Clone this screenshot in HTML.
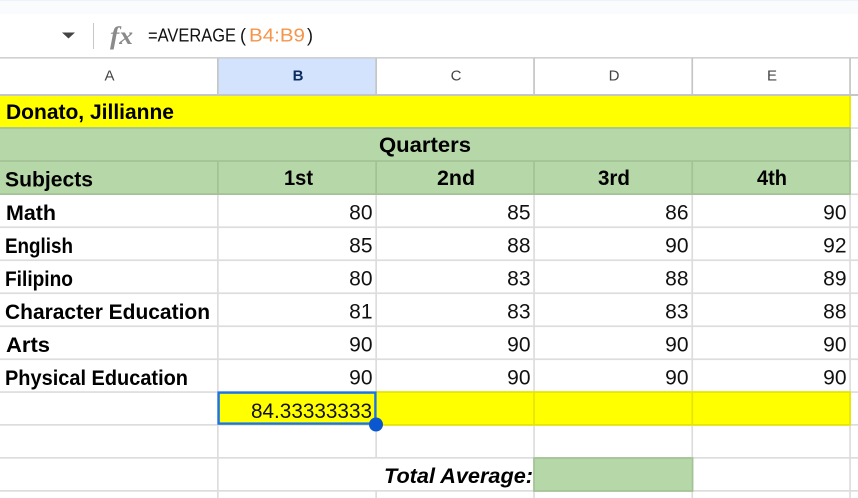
<!DOCTYPE html>
<html><head><meta charset="utf-8"><style>
html,body{margin:0;padding:0;width:858px;height:498px;overflow:hidden;background:#fff}
svg{display:block}
.c{font-family:"Liberation Sans",sans-serif;font-weight:bold;font-size:21px;fill:#000}
.n{font-family:"Liberation Sans",sans-serif;font-size:21px;fill:#111}
.h{font-family:"Liberation Sans",sans-serif;font-size:15px;fill:#444;text-anchor:middle}
.f{font-family:"Liberation Sans",sans-serif;font-size:18px;fill:#111}
</style></head><body>
<svg width="858" height="498" viewBox="0 0 858 498" xmlns="http://www.w3.org/2000/svg">
<!-- top strip -->
<rect x="0" y="0" width="858" height="14" fill="#f9fbfd"/>
<rect x="0" y="0" width="858" height="1" fill="#eef2fb"/>
<!-- formula bar -->
<path d="M62 32.5H75L68.5 38.5Z" fill="#444"/>
<rect x="93" y="23" width="1" height="26" fill="#c7c7c7"/>
<text x="110" y="44" font-family="Liberation Serif,serif" font-style="italic" font-weight="bold" font-size="25" fill="#8a8a8a" textLength="23" lengthAdjust="spacingAndGlyphs">fx</text>
<text x="148" y="41.5" class="f" textLength="88" lengthAdjust="spacingAndGlyphs">=AVERAGE</text>
<text x="240" y="41.5" class="f">(</text>
<text x="249" y="41.5" class="f" style="fill:#f6944a" textLength="56" lengthAdjust="spacingAndGlyphs">B4:B9</text>
<text x="307" y="41.5" class="f">)</text>

<!-- column header -->
<rect x="218" y="58" width="158" height="37" fill="#d3e3fd"/>
<rect x="0" y="57.2" width="858" height="1.3" fill="#c4c7c5"/>
<rect x="0" y="94" width="858" height="2" fill="#c4c7c5"/>
<g fill="#c4c7c5">
<rect x="217" y="58" width="1.7" height="37"/>
<rect x="375.3" y="58" width="1.7" height="37"/>
<rect x="533.2" y="58" width="1.7" height="37"/>
<rect x="691.4" y="58" width="1.7" height="37"/>
<rect x="849.2" y="58" width="1.7" height="37"/>
</g>
<text x="109.5" y="80.5" class="h">A</text>
<text x="298" y="80.5" class="h" style="fill:#0b2a5e;font-weight:bold">B</text>
<text x="456" y="80.5" class="h">C</text>
<text x="614" y="80.5" class="h">D</text>
<text x="772" y="80.5" class="h">E</text>

<!-- grid -->
<g fill="#dddddd">
<rect x="0" y="226.4" width="858" height="1.7"/>
<rect x="0" y="259.4" width="858" height="1.7"/>
<rect x="0" y="292.4" width="858" height="1.7"/>
<rect x="0" y="325.4" width="858" height="1.7"/>
<rect x="0" y="358.4" width="858" height="1.7"/>
<rect x="0" y="391.2" width="858" height="1.7"/>
<rect x="0" y="424" width="858" height="1.7"/>
<rect x="0" y="457" width="858" height="1.7"/>
<rect x="0" y="490" width="858" height="1.7"/>
<rect x="850" y="127.2" width="8" height="1.7"/>
<rect x="850" y="160.2" width="8" height="1.7"/>
<rect x="850" y="193.4" width="8" height="1.7"/>
<rect x="217" y="194" width="1.7" height="304"/>
<rect x="375.3" y="194" width="1.7" height="264"/>
<rect x="375.3" y="491" width="1.7" height="7"/>
<rect x="533.2" y="194" width="1.7" height="304"/>
<rect x="691.4" y="194" width="1.7" height="304"/>
<rect x="849.2" y="194" width="1.7" height="304"/>
</g>

<!-- yellow title -->
<rect x="0" y="96" width="850.6" height="32" fill="#ffff00"/>
<rect x="849.2" y="96" width="1.7" height="32" fill="#e6e600"/>
<!-- green rows -->
<rect x="0" y="128" width="850.6" height="66" fill="#b6d7a8"/>
<g fill="#a3c296">
<rect x="0" y="127.1" width="850.6" height="1.7"/>
<rect x="0" y="160.2" width="850.6" height="1.7"/>
<rect x="0" y="193.3" width="850.6" height="1.7"/>
<rect x="849.2" y="128" width="1.7" height="66"/>
<rect x="217" y="161" width="1.7" height="33"/>
<rect x="375.3" y="161" width="1.7" height="33"/>
<rect x="533.2" y="161" width="1.7" height="33"/>
<rect x="691.4" y="161" width="1.7" height="33"/>
</g>

<!-- yellow average row -->
<rect x="218" y="392" width="632.6" height="33" fill="#ffff00"/>
<g fill="#e6e600">
<rect x="376" y="391.2" width="474.8" height="1.7"/>
<rect x="376" y="424" width="474.8" height="1.8"/>
<rect x="533.2" y="392" width="1.7" height="33"/>
<rect x="691.4" y="392" width="1.7" height="33"/>
<rect x="849.2" y="392" width="1.7" height="33"/>
</g>

<!-- total average green cell -->
<rect x="534" y="458" width="158.6" height="33" fill="#b6d7a8" stroke="#a3c296" stroke-width="1.7"/>

<!-- labels -->
<text x="6" y="119" class="c" textLength="168" lengthAdjust="spacingAndGlyphs">Donato, Jillianne</text>
<text x="379" y="152" class="c" textLength="92" lengthAdjust="spacingAndGlyphs">Quarters</text>
<text x="5" y="186.5" class="c" textLength="88" lengthAdjust="spacingAndGlyphs">Subjects</text>
<text x="284" y="185" class="c" textLength="29" lengthAdjust="spacingAndGlyphs">1st</text>
<text x="437" y="185" class="c" textLength="38" lengthAdjust="spacingAndGlyphs">2nd</text>
<text x="598" y="185" class="c" textLength="32" lengthAdjust="spacingAndGlyphs">3rd</text>
<text x="757" y="185" class="c" textLength="30" lengthAdjust="spacingAndGlyphs">4th</text>
<text x="6" y="220" class="c" textLength="50" lengthAdjust="spacingAndGlyphs">Math</text>
<text x="5" y="253" class="c" textLength="68" lengthAdjust="spacingAndGlyphs">English</text>
<text x="5" y="286" class="c" textLength="68" lengthAdjust="spacingAndGlyphs">Filipino</text>
<text x="5" y="319" class="c" textLength="205" lengthAdjust="spacingAndGlyphs">Character Education</text>
<text x="6" y="352" class="c" textLength="44" lengthAdjust="spacingAndGlyphs">Arts</text>
<text x="5" y="385" class="c" textLength="183" lengthAdjust="spacingAndGlyphs">Physical Education</text>
<text x="384" y="483" class="c" font-style="italic" textLength="149" lengthAdjust="spacingAndGlyphs">Total Average:</text>

<!-- numbers -->
<g text-anchor="end">
<text x="372.5" y="219.7" class="n">80</text><text x="530.5" y="219.7" class="n">85</text><text x="688.5" y="219.7" class="n">86</text><text x="846.5" y="219.7" class="n">90</text>
<text x="372.5" y="252.7" class="n">85</text><text x="530.5" y="252.7" class="n">88</text><text x="688.5" y="252.7" class="n">90</text><text x="846.5" y="252.7" class="n">92</text>
<text x="372.5" y="285.7" class="n">80</text><text x="530.5" y="285.7" class="n">83</text><text x="688.5" y="285.7" class="n">88</text><text x="846.5" y="285.7" class="n">89</text>
<text x="372.5" y="318.7" class="n">81</text><text x="530.5" y="318.7" class="n">83</text><text x="688.5" y="318.7" class="n">83</text><text x="846.5" y="318.7" class="n">88</text>
<text x="372.5" y="351.7" class="n">90</text><text x="530.5" y="351.7" class="n">90</text><text x="688.5" y="351.7" class="n">90</text><text x="846.5" y="351.7" class="n">90</text>
<text x="372.5" y="384.7" class="n">90</text><text x="530.5" y="384.7" class="n">90</text><text x="688.5" y="384.7" class="n">90</text><text x="846.5" y="384.7" class="n">90</text>
</g>
<text x="251" y="418" class="n" textLength="121" lengthAdjust="spacingAndGlyphs">84.33333333</text>

<!-- selection -->
<rect x="218.6" y="392.6" width="156.8" height="31" fill="none" stroke="#1a73e8" stroke-width="2.4"/>
<circle cx="376" cy="424.5" r="7" fill="#0b57d0"/>
</svg>
</body></html>
